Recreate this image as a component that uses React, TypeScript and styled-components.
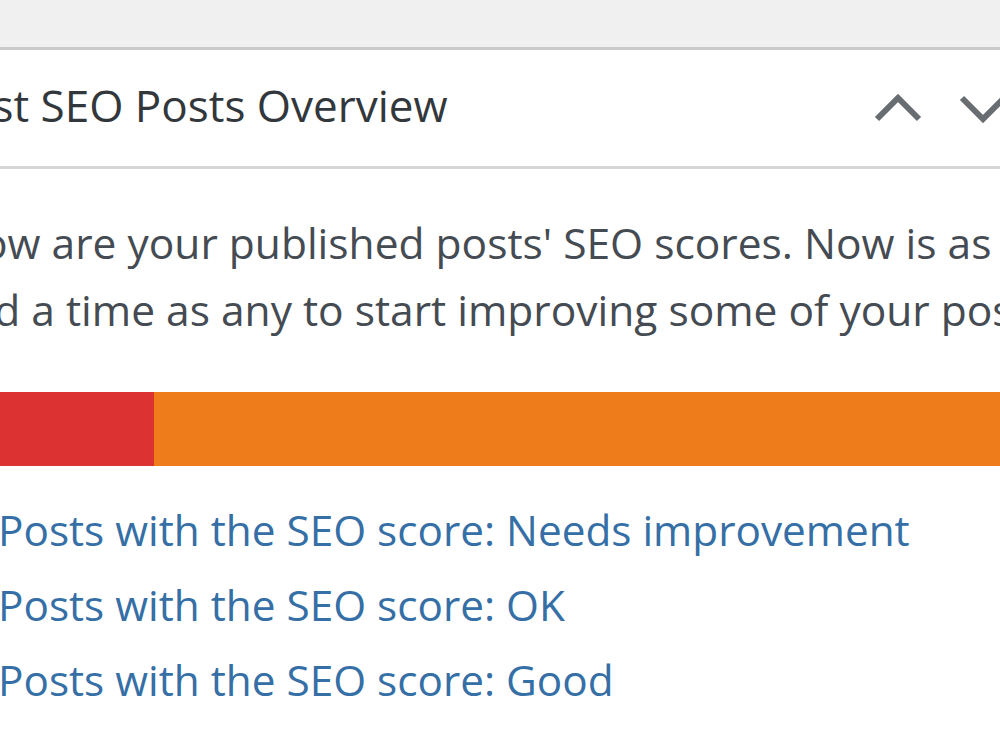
import styled, { createGlobalStyle } from 'styled-components';

const GlobalStyle = createGlobalStyle`
    html, body {
        margin: 0;
        padding: 0;
        background: #f0f0f1;
        overflow: hidden;
        font-family: "Open Sans", "Noto Sans", sans-serif;
    }
`;

const Page = styled.div`
    width: 1000px;
    height: 750px;
    overflow: hidden;
    padding-top: 47px;
    box-sizing: border-box;
`;

const Postbox = styled.div`
    margin-left: -123px;
    width: 1233px;
    background: #fff;
    border-top: 3px solid #c9cacc;
    height: 720px;
`;

const Header = styled.div`
    display: flex;
    align-items: center;
    height: 116px;
    border-bottom: 3px solid #d5d6d8;
`;

const Title = styled.h2`
    flex: 1;
    margin: 0 0 6px;
    padding-left: 40px;
    font-size: 44px;
    font-weight: 400;
    color: #32373c;
    white-space: nowrap;
`;

const Controls = styled.div`
    display: flex;
`;

const HandleButton = styled.button`
    width: 85px;
    height: 116px;
    padding: 0;
    border: 0;
    background: none;
    display: flex;
    align-items: center;
    justify-content: center;
    color: #686d72;
`;

const Inside = styled.div`
    padding: 40px 43px 0;
`;

const Intro = styled.p`
    margin: 0;
    font-size: 42.5px;
    line-height: 67px;
    color: #454b52;
`;

const ScoreBar = styled.div`
    display: flex;
    height: 74px;
    margin-top: 49px;
`;

const ScoreSegment = styled.div<{ $color: string }>`
    background: ${p => p.$color};
`;

const ScoreList = styled.ul`
    list-style: none;
    margin: 26px 0 0;
    padding: 0;
`;

const ScoreItem = styled.li`
    display: flex;
    align-items: center;
    gap: 40px;
    height: 75px;
    font-size: 42.3px;
`;

const ScoreDot = styled.span<{ $color: string }>`
    width: 38px;
    height: 38px;
    border-radius: 50%;
    background: ${p => p.$color};
`;

const ScoreLink = styled.a`
    color: #356fa6;
    text-decoration: none;
    white-space: nowrap;
`;

const Chevron = ({ up }: { up?: boolean }) => (
    <svg width="48" height="30" viewBox="0 0 48 30">
        <polyline
            points={up ? '3,26 24,5 45,26' : '3,5 24,26 45,5'}
            fill="none"
            stroke="currentColor"
            strokeWidth="6"
        />
    </svg>
);

const scores = [
    { label: 'Needs improvement', color: '#dc3232', count: 10 },
    { label: 'OK', color: '#ee7c1b', count: 39 },
    { label: 'Good', color: '#7ad03a', count: 0 },
];

const total = scores.reduce((sum, s) => sum + s.count, 0);

export default function App() {
    return (
        <Page>
            <GlobalStyle />
            <Postbox>
                <Header>
                    <Title>Yoast SEO Posts Overview</Title>
                    <Controls>
                        <HandleButton aria-label="Move up"><Chevron up /></HandleButton>
                        <HandleButton aria-label="Move down"><Chevron /></HandleButton>
                        <HandleButton aria-label="Toggle panel" />
                    </Controls>
                </Header>
                <Inside>
                    <Intro>
                        Below are your published posts' SEO scores. Now is as good a time as any to start improving some of your posts!
                    </Intro>
                    <ScoreBar>
                        {scores.filter(s => s.count > 0).map(s => (
                            <ScoreSegment
                                key={s.label}
                                $color={s.color}
                                style={{ width: `${(s.count / total) * 100}%` }}
                            />
                        ))}
                    </ScoreBar>
                    <ScoreList>
                        {scores.map(s => (
                            <ScoreItem key={s.label}>
                                <ScoreDot $color={s.color} />
                                <ScoreLink href="#">Posts with the SEO score: {s.label}</ScoreLink>
                            </ScoreItem>
                        ))}
                    </ScoreList>
                </Inside>
            </Postbox>
        </Page>
    );
}
